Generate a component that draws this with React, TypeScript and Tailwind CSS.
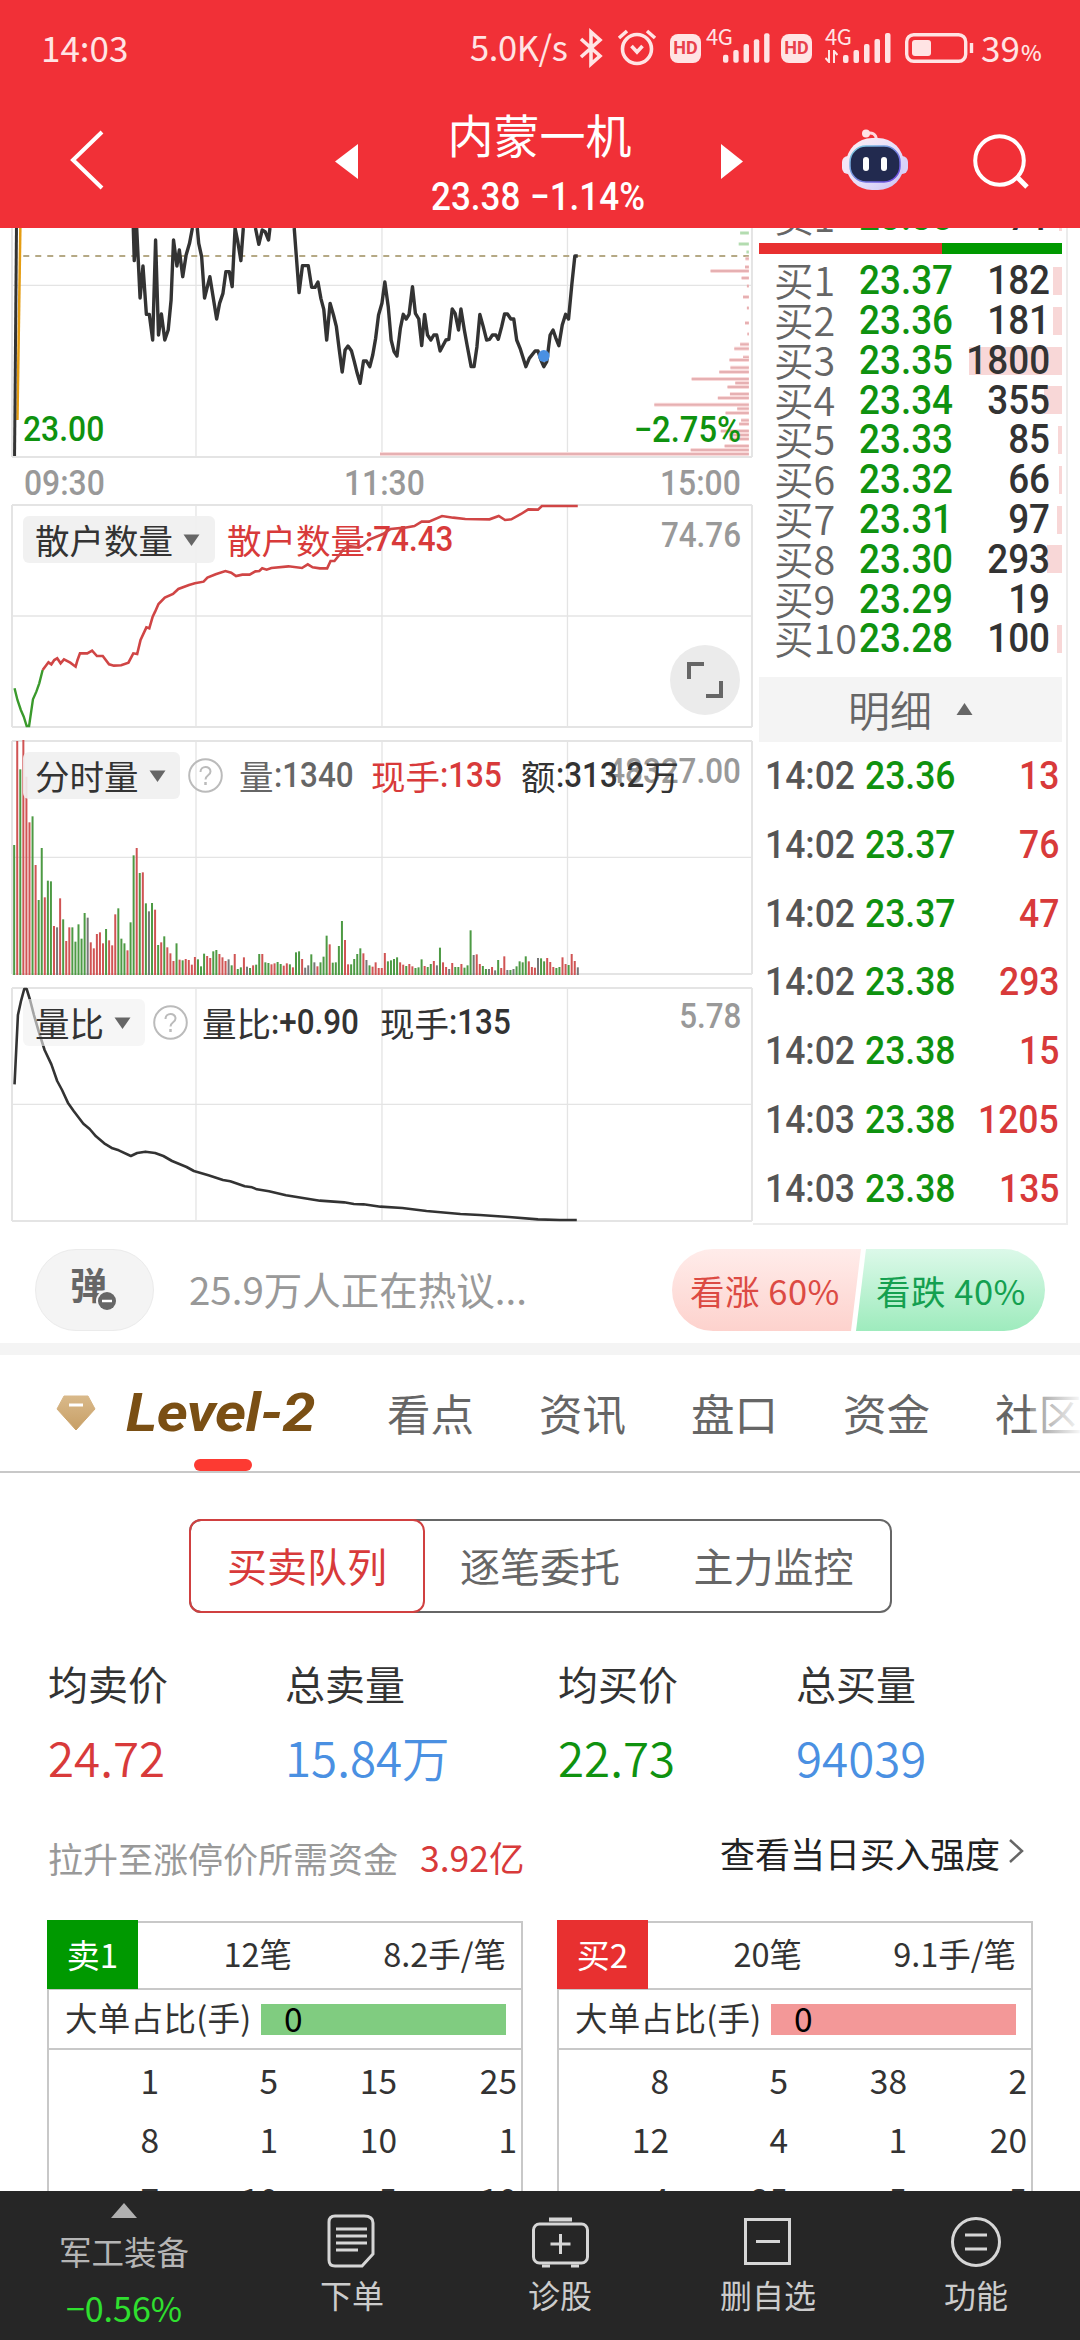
import type { ReactNode } from 'react';
import clsx from 'clsx';

interface DepthRow {
  label: string;
  price: string;
  volume: string;
  bar: number;
}

interface Trade {
  time: string;
  price: string;
  volume: string;
}

const BUY_ROWS: DepthRow[] = [
  { label: '买1', price: '23.37', volume: '182', bar: 9 },
  { label: '买2', price: '23.36', volume: '181', bar: 9 },
  { label: '买3', price: '23.35', volume: '1800', bar: 93 },
  { label: '买4', price: '23.34', volume: '355', bar: 18 },
  { label: '买5', price: '23.33', volume: '85', bar: 4 },
  { label: '买6', price: '23.32', volume: '66', bar: 3 },
  { label: '买7', price: '23.31', volume: '97', bar: 5 },
  { label: '买8', price: '23.30', volume: '293', bar: 15 },
  { label: '买9', price: '23.29', volume: '19', bar: 0 },
  { label: '买10', price: '23.28', volume: '100', bar: 5 },
];

const TRADES: Trade[] = [
  { time: '14:02', price: '23.36', volume: '13' },
  { time: '14:02', price: '23.37', volume: '76' },
  { time: '14:02', price: '23.37', volume: '47' },
  { time: '14:02', price: '23.38', volume: '293' },
  { time: '14:02', price: '23.38', volume: '15' },
  { time: '14:03', price: '23.38', volume: '1205' },
  { time: '14:03', price: '23.38', volume: '135' },
];

const TABS = ['看点', '资讯', '盘口', '资金'];

const STATS = [
  { label: '均卖价', value: '24.72', width: 'w-[237px]', color: 'text-[#d83a3a]' },
  { label: '总卖量', value: '15.84万', width: 'w-[273px]', color: 'text-[#4a90e2]' },
  { label: '均买价', value: '22.73', width: 'w-[238px]', color: 'text-[#0f920f]' },
  { label: '总买量', value: '94039', width: 'w-[200px]', color: 'text-[#4a90e2]' },
];

const QUEUES = [
  {
    name: '卖1',
    count: '12笔',
    avg: '8.2手/笔',
    badge: 'bg-[#009900]',
    bar: 'bg-[#80cc80]',
    rows: [['1', '5', '15', '25'], ['8', '1', '10', '1'], ['7', '10', '5', '10']],
  },
  {
    name: '买2',
    count: '20笔',
    avg: '9.1手/笔',
    badge: 'bg-[#e83030]',
    bar: 'bg-[#f39898]',
    rows: [['8', '5', '38', '2'], ['12', '4', '1', '20'], ['4', '25', '5', '5']],
  },
];

const PRICE_LINES = [
  '275,24 277,122 282,24 289,234 295,138 302,283 308,283 315,360 321,60 327,345 333,282 340,360 347,330 353,240 358,60 365,138 370,90 377,170 384,105 391,70 397,24',
  '407,24 410,70 416,110 422,234 433,170 447,297 453,250 460,220 466,155 473,155 479,200 485,24 490,60 497,122 502,24',
  '527,24 534,73 541,30 547,35 554,60 557,24',
  '607,24 617,218 624,137 636,137 643,202 650,202 656,186 662,235 668,268 674,360 681,250 688,285 694,320 700,390 706,456 712,390 718,378 725,392 731,425 737,460 743,490 750,423 756,423 763,440 769,405 775,355 781,285 788,250 794,186 801,260 807,360 813,395 819,408 826,325 832,283 838,297 844,283 851,200 857,280 864,297 870,377 876,283 882,345 889,360 895,345 901,345 908,393 920,360 926,358 933,267 939,280 946,330 951,267 958,330 964,378 972,440 978,440 984,380 990,283 997,320 1004,360 1010,358 1016,345 1023,345 1028,358 1035,320 1041,282 1047,282 1054,297 1060,297 1066,360 1073,385 1085,440 1092,415 1104,393 1110,393 1116,420 1122,440 1128,425 1135,345 1141,330 1147,355 1153,377 1160,315 1167,283 1173,297 1180,190 1186,108 1192,108',
];

// [y, left edge] of every price level, bars grow from the right side
const LEVELS = [
  [116, 1538], [141, 1537], [153, 1466], [174, 1530], [198, 1541], [231, 1533], [264, 1541], [309, 1537], [342, 1542],
  [373, 1527], [386, 1515], [412, 1533], [420, 1505], [443, 1507], [456, 1484], [477, 1427], [489, 1517], [501, 1501],
  [522, 1506], [534, 1481], [554, 1350], [566, 1521], [579, 1497], [601, 1529], [612, 1525], [633, 1487], [645, 1505],
  [657, 1505], [678, 1495], [690, 1425], [702, 784],
];

const RETAIL_DOWN = '30,565 36,600 43,630 49,650 55,678 60,678 68,598 75,575 81,550 88,510';
const RETAIL_UP =
  '88,510 100,487 106,493 112,480 118,475 125,490 132,478 145,488 156,500 160,480 165,460 180,460 190,452 200,468 212,468 225,493 235,497 250,496 265,488 275,460 283,462 290,420 302,382 308,385 315,350 320,335 327,312 340,293 357,282 368,267 390,255 402,250 420,245 428,233 445,223 465,213 477,218 487,228 500,224 515,224 527,214 535,213 541,205 550,209 560,204 595,199 623,204 635,193 645,202 660,205 675,205 682,183 690,183 700,165 710,145 720,138 740,142 750,135 760,120 790,102 806,87 835,83 855,78 870,65 885,65 912,48 935,53 960,57 1010,58 1029,48 1042,60 1055,58 1075,42 1090,28 1110,29 1118,18 1192,18';

const RATIO =
  '30,328 37,120 43,80 50,42 55,42 62,75 70,120 80,170 92,225 106,268 118,318 128,345 140,383 152,408 172,446 185,462 198,484 215,505 232,520 245,526 270,543 283,534 300,530 320,534 337,543 355,558 385,576 400,588 430,601 460,615 475,619 505,634 520,637 530,643 555,649 590,661 660,677 710,682 730,687 750,688 785,695 830,699 880,708 950,717 990,720 1050,726 1110,733 1155,735 1190,735';

// per minute volume: g = down, r = up, k = flat, number = top of the bar
const VOLUME =
  'g345 r33 g118 r30 r140 r277 g259 r405 g510 g354 r502 g452 g454 r588 k592 r505 g568 r633 r592 g592 g635 g583 g626 g549 k563 r637 r655 r612 r607 r640 g597 r631 r646 r553 g535 g626 g640 r661 g577 g376 r354 g429 r427 g520 k544 g519 r539 g645 r637 g619 r652 r670 r693 g640 r689 g691 r687 r690 r704 r681 g688 g709 g671 r678 r684 g664 g660 r672 r682 r693 k688 g706 r672 g717 g712 r682 k710 g714 r706 g704 g672 r672 g697 g699 r703 r700 g696 g702 r707 r700 g703 r712 g667 g664 r687 k713 k706 g673 k697 r709 g697 g680 g617 r643 g698 g697 g648 g573 r630 r703 g703 g687 g672 g655 r670 k690 g706 r710 r697 r714 r714 r669 g694 g691 g687 g682 r697 r704 g708 r702 r709 g714 g712 g688 r708 g711 g702 r693 k706 g653 r697 r711 k717 r699 g711 g711 r702 g713 g706 g601 k675 r673 r702 g708 g717 k717 r711 k721 g690 r714 r679 k720 g720 k717 g709 g694 g697 g679 r694 r711 r713 k684 g685 g694 r684 r696 r711 g714 g711 r682 r702 g705 r672 r693 k712'.split(
    ' ',
  );

const VOLUME_COLORS: Record<string, string> = { g: '#4d9a44', r: '#d05454', k: '#777777' };

// DIN style figures: Roboto pressed a little narrower inside a box of known width
function Num({ children, className, right }: { children: ReactNode; className?: string; right?: boolean }) {
  return (
    <span className={clsx('inline-block whitespace-nowrap font-[Roboto] font-medium', right && 'text-right', className)}>
      <span className={clsx('inline-block scale-x-[0.91]', right ? 'origin-right -ml-8' : 'origin-left -mr-8')}>
        {children}
      </span>
    </span>
  );
}

function Grid({ top, mid, bottom, scaleX = 2.063 }: { top: number; mid: number; bottom: number; scaleX?: number }) {
  const x = (v: number) => v * scaleX;
  return (
    <g stroke="#e4e4e4" fill="none">
      {[12, 752].map((v) => (
        <path key={v} d={`M${x(v)} ${top}V${bottom}`} strokeWidth="2" vectorEffect="non-scaling-stroke" />
      ))}
      {[196, 382, 567.5].map((v) => (
        <path key={v} d={`M${x(v)} ${top}V${bottom}`} strokeWidth="1.3" vectorEffect="non-scaling-stroke" />
      ))}
      <path d={`M${x(12)} ${mid}H${x(752)}`} strokeWidth="1.3" vectorEffect="non-scaling-stroke" />
      <path d={`M${x(12)} ${top}H${x(752)}M${x(12)} ${bottom}H${x(752)}`} strokeWidth="2" vectorEffect="non-scaling-stroke" />
    </g>
  );
}

function Picker({ children, className }: { children: ReactNode; className: string }) {
  return (
    <div className={clsx('flex h-[47px] shrink-0 items-center rounded-md pl-3 text-[#333]', className)}>
      {children}
      <svg className="ml-2.5" width="17" height="12" viewBox="0 0 17 12">
        <path d="M0.5 0.5H16.5L8.5 12Z" fill="#666" />
      </svg>
    </div>
  );
}

function Help() {
  return (
    <svg className="ml-2 shrink-0" width="35" height="35" viewBox="0 0 35 35" fill="none" stroke="#bbb" strokeWidth="2">
      <circle cx="17.5" cy="17.5" r="16.3" />
      <path d="M12.5 14C12.5 7.5 22.5 7.5 22.5 13.5C22.5 17.5 17.5 17 17.5 21.5" />
      <path d="M17.5 24V27" strokeWidth="2.5" />
    </svg>
  );
}

function Signal() {
  return (
    <svg width="48" height="30" viewBox="0 0 48 30" fill="#ffe4e4">
      <rect x="0" y="22" width="5.5" height="8" rx="2" />
      <rect x="10.5" y="17" width="5.5" height="13" rx="2" />
      <rect x="21" y="11" width="5.5" height="19" rx="2" />
      <rect x="31.5" y="6" width="5.5" height="24" rx="2" />
      <rect x="42" y="0" width="5.5" height="30" rx="2" />
    </svg>
  );
}

function Hd() {
  return (
    <span className="flex h-[29px] w-[31px] shrink-0 items-center justify-center rounded-lg bg-[#ffe4e4] font-[Roboto] text-[18px] font-bold text-[#e8404a]">
      HD
    </span>
  );
}

function StatusBar() {
  return (
    <div className="flex h-[96px] items-center pl-[41px] text-[35px] text-[#ffe4e4]">
      <span className="-mt-1 w-[429px]">14:03</span>
      <span className="-mt-1 w-[109px] text-[34.5px] tracking-[-0.4px] whitespace-nowrap">5.0K/s</span>
      <svg width="24" height="40" viewBox="0 0 24 40" fill="none" stroke="#ffe4e4" strokeWidth="3.6">
        <path d="M2 11L21 28L12 36V4L21 12L2 29" />
      </svg>
      <svg className="ml-3.5" width="40" height="40" viewBox="0 0 40 40" fill="none" stroke="#ffe4e4" strokeWidth="3.6">
        <circle cx="20" cy="21" r="14.5" />
        <path d="M14.5 18L20 24L25.5 18M2 10L10 3M38 10L30 3" />
      </svg>
      <span className="w-[13px]" />
      <Hd />
      <span className="ml-[5px] flex w-[64px]">
        <span className="-mt-2.5 w-[17px] text-[22px] leading-[24px] tracking-[-0.5px] whitespace-nowrap">4G</span>
        <Signal />
      </span>
      <span className="w-[11px]" />
      <Hd />
      <span className="relative ml-[13px] flex w-[68px]">
        <span className="-mt-2.5 w-[18px] text-[22px] leading-[24px] tracking-[-0.5px] whitespace-nowrap">4G</span>
        <Signal />
        <svg className="absolute bottom-0 left-0" width="13" height="13" viewBox="0 0 13 13" fill="none" stroke="#ffe4e4" strokeWidth="2">
          <path d="M4 0V12L0.5 8M9 13V1L12.5 5" />
        </svg>
      </span>
      <svg className="ml-3" width="70" height="30" viewBox="0 0 70 30" fill="none" stroke="#ffe4e4" strokeWidth="3.4">
        <rect x="1.7" y="1.7" width="59" height="26.6" rx="7" />
        <rect x="7" y="7" width="19" height="16" rx="3" fill="#ffe4e4" stroke="none" />
        <path d="M66.5 10V20" />
      </svg>
      <span className="-mt-1 ml-1.5 w-[40px]">39</span>
      <span className="mt-1.5 text-[22px] font-medium">%</span>
    </div>
  );
}

function Robot() {
  return (
    <svg width="66" height="62" viewBox="0 0 66 62">
      <defs>
        <linearGradient id="shell" x1="0" y1="0" x2="1" y2="1">
          <stop offset="0" stopColor="#ffeef2" />
          <stop offset="0.6" stopColor="#e3dcfa" />
          <stop offset="1" stopColor="#c9c0f2" />
        </linearGradient>
        <linearGradient id="rim" x1="0" y1="0" x2="1" y2="1">
          <stop offset="0" stopColor="#7fd3e0" />
          <stop offset="1" stopColor="#6a3fe0" />
        </linearGradient>
      </defs>
      <path d="M24 4.500C30 3 34 4.500 34.500 11" fill="none" stroke="#ffd9df" strokeWidth="3" />
      <circle cx="24" cy="4.5" r="4" fill="#ffe3e8" />
      <rect x="0" y="27" width="12" height="18" rx="6" fill="#f3e6f6" />
      <rect x="54" y="27" width="12" height="18" rx="6" fill="#d9d2f8" />
      <rect x="4" y="9" width="58" height="52" rx="26" fill="url(#shell)" />
      <rect x="8" y="17" width="50" height="36" rx="16" fill="#222a4f" stroke="url(#rim)" strokeWidth="1.5" />
      <rect x="21" y="28" width="6" height="14" rx="3" fill="#fff" />
      <rect x="39" y="28" width="6" height="14" rx="3" fill="#fff" />
    </svg>
  );
}

function Header() {
  return (
    <header className="h-[228px] shrink-0 bg-[#f13037] text-white">
      <StatusBar />
      <div className="flex h-[132px] items-start">
        <svg className="mt-[34px] ml-[69px]" width="36" height="60" viewBox="0 0 36 60" fill="none" stroke="#fff" strokeWidth="4">
          <path d="M33 2L4 30L33 58" />
        </svg>
        <svg className="mt-[48px] ml-[230px]" width="23" height="35" viewBox="0 0 23 35">
          <path d="M23 0V35L0 17.5Z" fill="#fff" />
        </svg>
        <div className="flex w-[363px] flex-col items-center">
          <h1 className="mt-[7px] text-[46px] leading-[60px]">内蒙一机</h1>
          <div className="mt-[14px] flex font-[Roboto] text-[38.5px] leading-[40px] font-medium">
            <Num className="w-[99px]">23.38</Num>
            <Num className="w-[118px]">−1.14%</Num>
          </div>
        </div>
        <svg className="mt-[48px]" width="22" height="35" viewBox="0 0 22 35">
          <path d="M0 0V35L22 17.5Z" fill="#fff" />
        </svg>
        <div className="mt-[33px] ml-[99px]">
          <Robot />
        </div>
        <svg className="mt-[37px] ml-[64px]" width="58" height="58" viewBox="0 0 58 58" fill="none" stroke="#fff" strokeWidth="4">
          <circle cx="27.5" cy="27.5" r="24.3" />
          <path d="M45 44L55 54" strokeWidth="5" />
        </svg>
      </div>
    </header>
  );
}

function PriceChart() {
  return (
    <div className="relative h-[230px] font-[Roboto] text-[35px] text-[#0f920f]">
      <svg className="absolute inset-0" width="760" height="230" viewBox="0 24 1568 690" preserveAspectRatio="none" fill="none">
        <Grid top={0} mid={196} bottom={711} />
        <path d="M48 108H1545" stroke="#b5a985" strokeWidth="1.8" strokeDasharray="6 6" vectorEffect="non-scaling-stroke" />
        <path d="M1527 39H1545M1524 72H1545M1540 96H1545" stroke="#b3dcb0" strokeWidth="3" vectorEffect="non-scaling-stroke" />
        {LEVELS.map(([y, x]) => (
          <g key={y}>
            <path d={`M${x} ${y}H1545`} stroke="#f9dada" strokeWidth="4" vectorEffect="non-scaling-stroke" />
            <path d={`M${x} ${y}H1545`} stroke="#e6b0b2" strokeWidth="2" vectorEffect="non-scaling-stroke" />
          </g>
        ))}
        <path d="M36 600L42 24" stroke="#e59d12" strokeWidth="2.5" vectorEffect="non-scaling-stroke" />
        <path d="M30 708L34 24" stroke="#333" strokeWidth="3" vectorEffect="non-scaling-stroke" />
        {PRICE_LINES.map((points) => (
          <polyline key={points} points={points} stroke="#333" strokeWidth="3.4" strokeLinejoin="round" vectorEffect="non-scaling-stroke" />
        ))}
        <ellipse cx="1122" cy="408" rx="12" ry="18" fill="#4a90e2" />
      </svg>
      <div className="relative flex justify-between pt-[182px] pr-[12px] pl-[23px] leading-[40px]">
        <Num className="w-[80px]">23.00</Num>
        <Num right className="w-[112px] text-[36px]">−2.75%</Num>
      </div>
    </div>
  );
}

function RetailChart() {
  return (
    <div className="relative h-[224px] text-[34.5px]">
      <svg className="absolute inset-0" width="760" height="224" viewBox="0 12 1568 672" preserveAspectRatio="none" fill="none">
        <Grid top={15} mid={348} bottom={681} />
      </svg>
      <div className="relative flex h-[71px] items-center pl-[23px]">
        <Picker className="w-[192px] bg-[#f0f0f0]/90">散户数量</Picker>
        <div className="ml-3 flex items-center whitespace-nowrap text-[#d83a3a]">
          散户数量<Num className="w-[90px]">:74.43</Num>
        </div>
        <Num right className="mr-[12px] mb-2 ml-auto w-[90px] text-[#999]">74.76</Num>
      </div>
      <svg className="absolute inset-0" width="760" height="224" viewBox="0 12 1568 672" preserveAspectRatio="none" fill="none">
        <polyline points={RETAIL_DOWN} stroke="#3a9a2c" strokeWidth="2.4" vectorEffect="non-scaling-stroke" />
        <polyline points={RETAIL_UP} stroke="#d04545" strokeWidth="2.6" vectorEffect="non-scaling-stroke" />
      </svg>
      <div className="absolute top-[141px] right-[13px] flex size-[70px] items-center justify-center rounded-full bg-[#ebebeb]">
        <svg width="38" height="38" viewBox="0 0 38 38" fill="none" stroke="#666" strokeWidth="4">
          <path d="M3 18V3H18M20 35H35V20" />
        </svg>
      </div>
    </div>
  );
}

function VolumeChart() {
  return (
    <div className="relative mt-3 h-[235px] text-[34.5px]">
      <svg className="absolute inset-0" width="760" height="235" viewBox="0 30 2280 705" preserveAspectRatio="none" fill="none">
        <Grid top={33} mid={382} bottom={732} scaleX={3} />
        {VOLUME.map((v, i) => (
          <rect key={i} x={39.5 + i * 9.19} y={Number(v.slice(1))} width="6" height={735 - Number(v.slice(1))} fill={VOLUME_COLORS[v[0]]} />
        ))}
      </svg>
      <div className="relative flex h-[71px] items-center pl-[23px] whitespace-nowrap">
        <Picker className="w-[157px] bg-[#f0f0f0]/90">分时量</Picker>
        <Help />
        <div className="ml-4 flex w-[132px] items-center text-[#666]">
          量<Num className="w-[80px]">:1340</Num>
        </div>
        <div className="flex w-[150px] items-center text-[#d83a3a]">
          现手<Num className="w-[64px]">:135</Num>
        </div>
        <div className="z-10 flex w-[160px] items-center text-[#333]">
          额<Num className="w-[89px]">:313.2</Num>万
        </div>
        <Num right className="mb-2 -ml-[80px] w-[140px] text-[#999]">48327.00</Num>
      </div>
    </div>
  );
}

function RatioChart() {
  return (
    <div className="relative mt-3 h-[235px] text-[34.5px]">
      <svg className="absolute inset-0" width="760" height="235" viewBox="0 36 1568 705" preserveAspectRatio="none" fill="none">
        <Grid top={39} mid={388} bottom={738} />
        <polyline points={RATIO} stroke="#333" strokeWidth="2.6" strokeLinejoin="round" vectorEffect="non-scaling-stroke" />
      </svg>
      <div className="relative flex h-[71px] items-center pl-[23px] whitespace-nowrap text-[#333]">
        <Picker className="w-[122px] bg-[#f0f0f0]/60">量比</Picker>
        <Help />
        <div className="ml-3.5 flex w-[178px] items-center">
          量比<Num className="w-[90px]">:+0.90</Num>
        </div>
        <div className="flex items-center">
          现手<Num className="w-[64px]">:135</Num>
        </div>
        <Num right className="mr-[12px] mb-3 ml-auto w-[80px] text-[#999]">5.78</Num>
      </div>
    </div>
  );
}

function DepthLine({ row }: { row: DepthRow }) {
  return (
    <div className="relative flex h-[39.78px] items-center text-[40.5px] leading-[39px]">
      <span className="-mt-1 w-[101px] pl-[15px] text-[39.5px] font-[350] whitespace-nowrap text-[#666]">{row.label}</span>
      <div className="absolute top-[6px] right-0 h-[28px] bg-[#f8d7d7]" style={{ width: row.bar }} />
      <Num className="relative w-[94px] text-[#0f920f]">{row.price}</Num>
      <Num right className="relative mr-[12px] ml-auto w-[100px] text-[#333]">{row.volume}</Num>
    </div>
  );
}

function OrderBook() {
  return (
    <div className="h-[997px] w-[315px] border-r-2 border-b-2 border-[#ececec] pr-1 pl-1.5">
      <div className="flex h-[15px] items-end overflow-hidden">
        <div className="h-[46px] w-full">
          <DepthLine row={{ label: '卖1', price: '23.38', volume: '71', bar: 3 }} />
        </div>
      </div>
      <div className="flex h-[11px]">
        <div className="w-[183px] bg-[#e83030]" />
        <div className="flex-1 bg-[#009900]" />
      </div>
      <div className="pt-[7px]">
        {BUY_ROWS.map((row) => (
          <DepthLine key={row.label} row={row} />
        ))}
      </div>
      <div className="mt-[18px] flex h-[65px] items-center justify-center bg-[#f4f4f4] text-[42px] text-[#666]">
        <span className="font-[350]">明细</span>
        <svg className="ml-6" width="17" height="12" viewBox="0 0 17 12">
          <path d="M0.5 12H16.5L8.5 0Z" fill="#666" />
        </svg>
      </div>
      <div>
        {TRADES.map((t, i) => (
          <div key={i} className="flex h-[68.95px] items-center pl-[6px] text-[39px]">
            <Num className="w-[100px] text-[#555]">{t.time}</Num>
            <Num className="w-[94px] text-[#0f920f]">{t.price}</Num>
            <Num right className="mr-[3px] ml-auto w-[90px] text-[#d83a3a]">{t.volume}</Num>
          </div>
        ))}
      </div>
    </div>
  );
}

function HotBar() {
  return (
    <div className="flex h-[118px] items-center pt-[12px] pl-[35px]">
      <div className="relative flex h-[82px] w-[119px] items-center justify-center rounded-full border border-[#ebebeb] bg-[#f4f4f4] text-[37px] font-bold text-[#666]">
        <span className="-mt-3 -ml-3">弹</span>
        <svg className="absolute top-[40px] left-[60px]" width="22" height="22" viewBox="0 0 22 22">
          <circle cx="11" cy="11" r="11" fill="#f4f4f4" />
          <circle cx="11" cy="11" r="9" fill="#666" />
          <path d="M6 11H16" stroke="#fff" strokeWidth="2.5" />
        </svg>
      </div>
      <span className="-mt-1 ml-[35px] w-[483px] text-[38.5px] text-[#999]">25.9万人正在热议...</span>
      <div className="relative flex h-[82px] w-[373px] items-center text-[34.5px] tracking-[0.5px] whitespace-nowrap">
        <svg className="absolute inset-0" width="373" height="82" viewBox="0 0 373 82">
          <defs>
            <linearGradient id="up" x1="0" y1="0" x2="0" y2="1">
              <stop offset="0" stopColor="#ffecea" />
              <stop offset="1" stopColor="#fdd2cd" />
            </linearGradient>
            <linearGradient id="down" x1="0" y1="0" x2="0" y2="1">
              <stop offset="0" stopColor="#dcf9e9" />
              <stop offset="1" stopColor="#9eebbd" />
            </linearGradient>
          </defs>
          <path d="M41 0H189L179 82H41A41 41 0 0 1 41 0Z" fill="url(#up)" />
          <path d="M194 0H332A41 41 0 0 1 332 82H184Z" fill="url(#down)" />
        </svg>
        <span className="relative w-[187px] pl-[18px] text-[#dc4a43]">看涨 60%</span>
        <span className="relative pl-[17px] text-[#14a050]">看跌 40%</span>
      </div>
    </div>
  );
}

function Tabs() {
  return (
    <div className="relative h-[118px] border-b-2 border-[#c8c8c8] text-[43.5px] text-[#666]">
      <div className="flex h-[116px] items-center overflow-hidden whitespace-nowrap">
        <svg className="ml-[56px] shrink-0" width="40" height="36" viewBox="0 0 40 36">
          <defs>
            <linearGradient id="gem" x1="0" y1="0" x2="0" y2="1">
              <stop offset="0" stopColor="#d9b98a" />
              <stop offset="1" stopColor="#c79f66" />
            </linearGradient>
          </defs>
          <path d="M8 1H32L39 14L20 35L1 14Z" fill="url(#gem)" stroke="url(#gem)" strokeLinejoin="round" />
          <path d="M13 10H27" stroke="#fff" strokeWidth="3" />
        </svg>
        <span className="ml-[30px] w-[261px] shrink-0 font-[Roboto] text-[54px] leading-none font-bold tracking-[-0.5px] text-[#7a4f14] italic">
          <span className="inline-block origin-left scale-x-[1.1]">Level-2</span>
        </span>
        {TABS.map((t) => (
          <span key={t} className="w-[152px] shrink-0">{t}</span>
        ))}
        <span>社区</span>
      </div>
      <div className="absolute top-[2px] right-0 h-[110px] w-[50px] bg-gradient-to-r from-white/30 to-white/95" />
      <div className="absolute bottom-0 left-[194px] h-[12px] w-[58px] rounded-full bg-[#fd3a32]" />
    </div>
  );
}

function Queue({ q }: { q: (typeof QUEUES)[number] }) {
  return (
    <div className="w-[476px] border-2 border-b-0 border-[#c8c8c8] text-[33.5px] text-[#333]">
      <div className="flex h-[67px] items-center border-b-2 border-[#c8c8c8]">
        <span className={clsx('-mt-0.5 -ml-0.5 flex h-[69px] w-[91px] items-center justify-center text-[33px] text-white', q.badge)}>
          {q.name}
        </span>
        <span className="-mt-1 w-[154px] text-right text-[32.5px]">{q.count}</span>
        <span className="-mt-1 flex-1 pr-[15px] text-right text-[32.5px]">{q.avg}</span>
      </div>
      <div className="flex h-[60px] items-center border-b-2 border-[#c8c8c8] pl-[16px]">
        <span className="-mt-1 w-[196px] text-[32.5px] tracking-[0.3px] whitespace-nowrap">大单占比(手)</span>
        <span className={clsx('flex h-[31px] w-[245px] items-center pl-[23px] text-black', q.bar)}>
          <span className="-mt-0.5">0</span>
        </span>
      </div>
      {q.rows.map((r, i) => (
        <div key={i} className="-mt-px flex h-[60.5px] items-center pl-[1px]">
          <span className="w-[109px] text-right">{r[0]}</span>
          <span className="w-[119px] text-right">{r[1]}</span>
          <span className="w-[119px] text-right">{r[2]}</span>
          <span className="w-[120px] text-right">{r[3]}</span>
        </div>
      ))}
    </div>
  );
}

function Level2() {
  return (
    <div className="h-[718px] overflow-hidden">
      <div className="mt-[46px] ml-[189px] flex h-[94px] w-[703px] rounded-xl border-2 border-[#666] text-[40px] text-[#666]">
        <span className="-m-0.5 flex w-[236px] items-center justify-center rounded-xl border-2 border-[#d04040] pb-0.5 text-[#d83a3a]">
          买卖队列
        </span>
        <span className="flex w-[234px] items-center justify-center pb-0.5">逐笔委托</span>
        <span className="flex flex-1 items-center justify-center pb-0.5">主力监控</span>
      </div>
      <div className="mt-[42px] flex pl-[48px]">
        {STATS.map((s) => (
          <div key={s.label} className={s.width}>
            <p className="text-[40px] leading-[56px] text-[#333]">{s.label}</p>
            <p className={clsx('mt-[16px] text-[47.5px] leading-[60px] font-[350]', s.color)}>{s.value}</p>
          </div>
        ))}
      </div>
      <div className="mt-[40px] flex h-[60px] items-center pl-[48px] text-[35px]">
        <span className="w-[372px] text-[#999]">拉升至涨停价所需资金</span>
        <span className="w-[300px] text-[35.5px] text-[#d83a3a]">3.92亿</span>
        <span className="-mt-2.5 text-[#222]">查看当日买入强度</span>
        <svg className="-mt-3 ml-2" width="16" height="26" viewBox="0 0 16 26" fill="none" stroke="#666" strokeWidth="2.5">
          <path d="M2 2L14 13L2 24" />
        </svg>
      </div>
      <div className="mt-[34px] flex gap-[34px] pl-[47px]">
        {QUEUES.map((q) => (
          <Queue key={q.name} q={q} />
        ))}
      </div>
    </div>
  );
}

function NavItem({ label, children }: { label: string; children: ReactNode }) {
  return (
    <div className="flex w-[208px] flex-col items-center">
      <svg className="mt-[20px]" width="60" height="60" viewBox="0 0 60 60" fill="none" stroke="#d6d6d6" strokeWidth="3">
        {children}
      </svg>
      <span className="text-[32px] leading-[46px] text-[#ccc]">{label}</span>
    </div>
  );
}

function BottomNav() {
  return (
    <nav className="flex h-[149px] shrink-0 bg-[#262626]">
      <div className="flex w-[248px] flex-col items-center">
        <svg className="mt-[12px]" width="26" height="15" viewBox="0 0 26 15">
          <path d="M0 15H26L13 0Z" fill="#b0b0b0" />
        </svg>
        <span className="mt-[10px] text-[32.5px] leading-[46px] text-[#b5b5b5]">军工装备</span>
        <span className="mt-[11px] text-[34px] leading-[46px] text-[#2fe02f]">−0.56%</span>
      </div>
      <NavItem label="下单">
        <path d="M13 5H42Q51 5 51 12V43L40 55H13Q7 55 7 49V11Q7 5 13 5Z" />
        <path d="M14 18H45M14 25H45M14 32H45M14 39H36" />
      </NavItem>
      <NavItem label="诊股">
        <path d="M19 8.500H42" strokeWidth="4" />
        <rect x="3.5" y="13" width="54" height="39" rx="6" />
        <path d="M30.500 23V43M20.500 33H40.500M12 55H20M41 55H49" />
      </NavItem>
      <NavItem label="删自选">
        <rect x="7.5" y="8.5" width="44" height="44" />
        <path d="M18 30.500H42" />
      </NavItem>
      <NavItem label="功能">
        <circle cx="30" cy="31" r="23.5" />
        <path d="M19 24H41M19 38H41" />
      </NavItem>
    </nav>
  );
}

export default function App() {
  return (
    <div className="flex h-[2340px] w-[1080px] flex-col overflow-hidden bg-white font-['Noto_Sans_CJK_SC',sans-serif] leading-none">
      <Header />
      <div className="flex h-[997px] shrink-0">
        <div className="w-[753px]">
          <PriceChart />
          <div className="flex h-[46px] items-center pt-1 pr-[12px] pl-[24px] text-[35px] text-[#999]">
            <Num className="w-[308px]">09:30</Num>
            <Num className="w-[90px] pl-3">11:30</Num>
            <Num right className="ml-auto w-[90px]">15:00</Num>
          </div>
          <RetailChart />
          <VolumeChart />
          <RatioChart />
        </div>
        <OrderBook />
      </div>
      <HotBar />
      <div className="h-[12px] shrink-0 bg-[#f4f4f4]" />
      <Tabs />
      <Level2 />
      <BottomNav />
    </div>
  );
}
